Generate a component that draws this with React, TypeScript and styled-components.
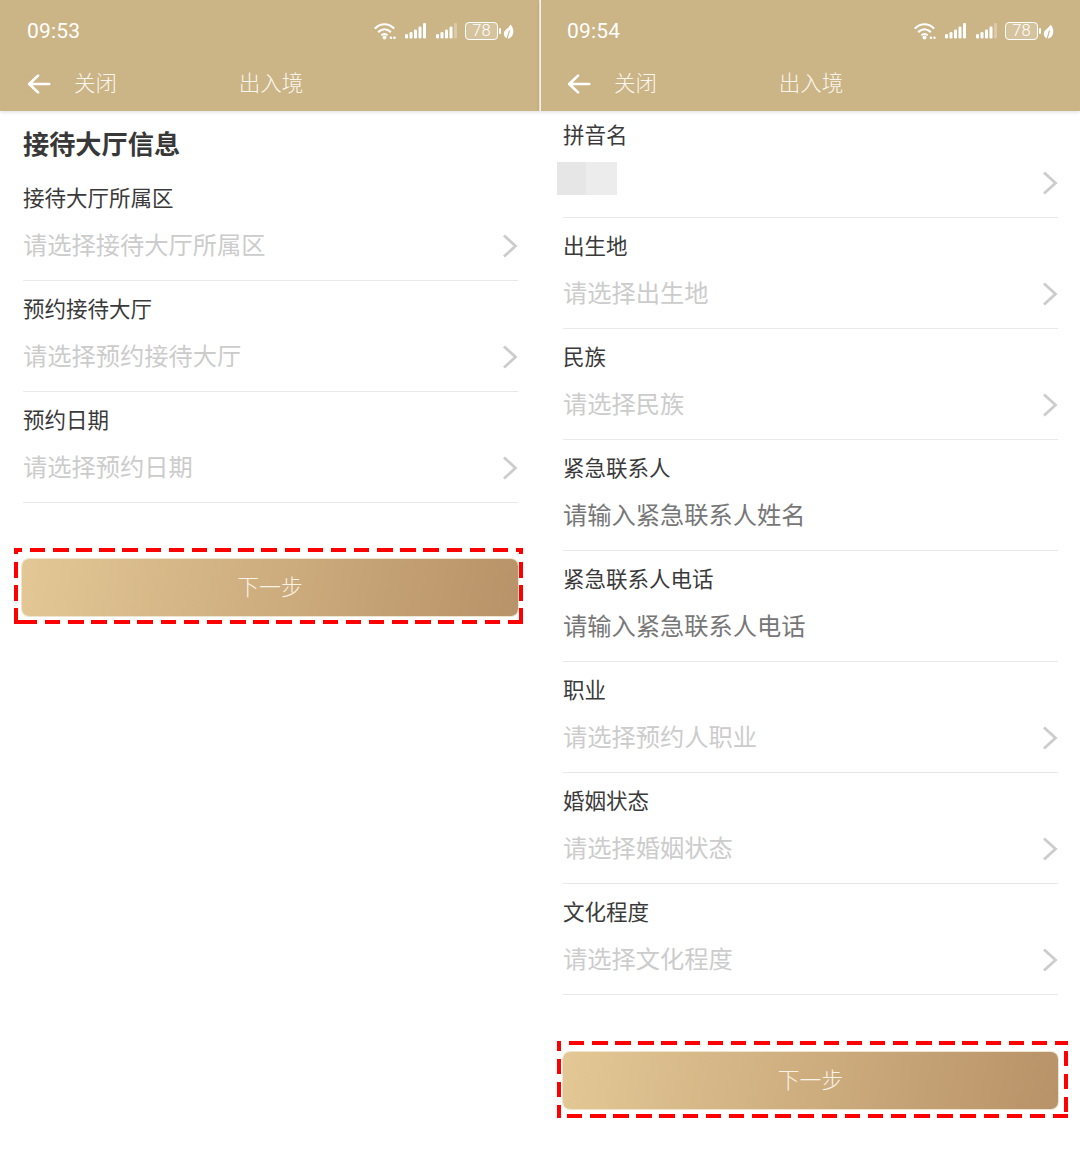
import { createGlobalStyle, styled } from "styled-components"

const GlobalStyle = createGlobalStyle`
  html, body {
    margin: 0;
    padding: 0;
    background: #fff;
  }
  body {
    font-family: "Liberation Sans", "Noto Sans CJK SC", sans-serif;
  }
  * {
    box-sizing: border-box;
  }
`

type FieldData = {
  label: string
  value?: string
  filled?: boolean
  arrow?: boolean
}

const leftFields: FieldData[] = [
  { label: "接待大厅所属区", value: "请选择接待大厅所属区", arrow: true },
  { label: "预约接待大厅", value: "请选择预约接待大厅", arrow: true },
  { label: "预约日期", value: "请选择预约日期", arrow: true },
]

const rightFields: FieldData[] = [
  { label: "出生地", value: "请选择出生地", arrow: true },
  { label: "民族", value: "请选择民族", arrow: true },
  { label: "紧急联系人", value: "请输入紧急联系人姓名", filled: true },
  { label: "紧急联系人电话", value: "请输入紧急联系人电话", filled: true },
  { label: "职业", value: "请选择预约人职业", arrow: true },
  { label: "婚姻状态", value: "请选择婚姻状态", arrow: true },
  { label: "文化程度", value: "请选择文化程度", arrow: true },
]

const Wifi = () => (
  <svg width="23" height="18" viewBox="0 0 23 18" fill="none" stroke="#fff" strokeLinecap="round">
    <path d="M1.5 6C6.8 1 14.2 1 19.5 6" strokeWidth="2.2" />
    <path d="M4.8 9.6C8.2 6.5 12.8 6.5 16.2 9.6" strokeWidth="2.2" />
    <path d="M8 12.8C9.5 11.8 11.5 11.8 13 12.8" strokeWidth="2" />
    <circle cx="10.5" cy="15.5" r="2" fill="#fff" stroke="none" />
    <circle cx="17" cy="15.8" r="1.3" fill="#fff" stroke="none" />
    <circle cx="20.5" cy="15.8" r="1.3" fill="#fff" stroke="none" />
  </svg>
)

const Signal = ({ dim }: { dim?: boolean }) => (
  <svg width="23" height="18" viewBox="0 0 23 18" fill="#fff">
    <rect x="1" y="12" width="3" height="4.5" rx="1.2" />
    <rect x="5.5" y="10" width="3" height="6.5" rx="1.2" />
    <rect x="10" y="7.5" width="3" height="9" rx="1.2" />
    <rect x="14.5" y="4.5" width="3" height="12" rx="1.2" />
    <rect x="19" y="1" width="3" height="15.5" rx="1.2" opacity={dim ? 0.3 : 1} />
  </svg>
)

const Leaf = () => (
  <svg width="11" height="15" viewBox="0 0 11 15">
    <path fill="#fff" d="M7.5 0.5C9.8 3 10.8 6 10.2 9.3C9.6 12.4 7.4 14.4 5 14.5C2.2 14.3 0.5 12 0.9 9C1.4 5.6 5.6 4.6 7.5 0.5Z" />
    <path fill="none" stroke="#cbb486" strokeWidth="1.1" d="M6.5 6.5L4.2 14.5" />
  </svg>
)

const BackArrow = () => (
  <svg width="24" height="20" viewBox="0 0 24 20" fill="none" stroke="#fff" strokeWidth="2.7" strokeLinecap="round" strokeLinejoin="round">
    <path d="M22.2 10H2.5" />
    <path d="M11 1.6L2.3 10L11 18.4" />
  </svg>
)

const Chevron = () => (
  <ChevronIcon width="16" height="24" viewBox="0 0 16 24" fill="none" stroke="#ccc" strokeWidth="2.8">
    <path d="M2 1.5L13.5 12L2 22.5" />
  </ChevronIcon>
)

const TopBar = ({ time, second }: { time: string; second?: boolean }) => (
  <Header $second={second}>
    <StatusBar>
      <Time>{time}</Time>
      <StatusIcons>
        <Wifi />
        <SignalGroup>
          <Signal />
          <Signal dim />
        </SignalGroup>
        <Battery>78</Battery>
        <BatteryTip />
        <Leaf />
      </StatusIcons>
    </StatusBar>
    <NavBar>
      <NavLeft>
        <BackArrow />
        <NavText>关闭</NavText>
      </NavLeft>
      <NavText>出入境</NavText>
    </NavBar>
  </Header>
)

const Field = ({ label, value, filled, arrow }: FieldData) => (
  <FieldRow>
    <Label>{label}</Label>
    <ValueRow>
      <Value $filled={filled}>{value}</Value>
      {arrow && <Chevron />}
    </ValueRow>
  </FieldRow>
)

const App = () => {
  return (
    <Page>
      <GlobalStyle />
      <Panel>
        <TopBar time="09:53" />
        <Content>
          <Title>接待大厅信息</Title>
          {leftFields.map((f) => (
            <Field key={f.label} {...f} />
          ))}
          <Frame
            $padLeft={8}
            $padRight={5}
            $padBottom={8}
            $width={509}
            $gap={45}
            $shift={-9}
            $dash={{ top: -7.3, bottom: 7.7, left: -9.15, right: -9.15, fill: 8 }}
          >
            <NextButton>下一步</NextButton>
          </Frame>
        </Content>
      </Panel>
      <Panel>
        <TopBar time="09:54" second />
        <Content>
          <FieldRow $first>
            <Label>拼音名</Label>
            <ValueRow>
              <Blurred>
                <BlurCell />
                <BlurCell $light />
              </Blurred>
              <Chevron />
            </ValueRow>
          </FieldRow>
          {rightFields.map((f) => (
            <Field key={f.label} {...f} />
          ))}
          <Frame
            $padLeft={6}
            $padRight={10}
            $padBottom={9}
            $width={511}
            $gap={46}
            $shift={-6}
            $dash={{ top: -11.3, bottom: -13.3, left: -5.3, right: 9.7, fill: 0 }}
          >
            <NextButton>下一步</NextButton>
          </Frame>
        </Content>
      </Panel>
    </Page>
  )
}
export default App

const Page = styled.div`
  width: 1080px;
  height: 1164px;
  display: grid;
  grid-template-columns: 540px 540px;
  background: #fff;
  overflow: hidden;
`

const Panel = styled.div`
  display: flex;
  flex-direction: column;
  min-width: 0;
`

const Header = styled.div<{ $second?: boolean }>`
  height: 111px;
  background: #cbb486;
  box-shadow:
    inset ${(p) => (p.$second ? "1px" : "-1px")} 0 0 #f4efe4,
    0 1px 4px rgba(0, 0, 0, 0.14);
  color: #fff;
  position: relative;
`

const StatusBar = styled.div`
  height: 62px;
  display: flex;
  align-items: center;
  justify-content: space-between;
  padding: 0 26px 0 27px;
`

const Time = styled.div`
  font-family: "Roboto", "Liberation Sans", sans-serif;
  font-size: 21px;
  font-weight: 400;
  letter-spacing: 0.2px;
`

const StatusIcons = styled.div`
  display: flex;
  align-items: center;
`

const SignalGroup = styled.div`
  display: flex;
  gap: 8px;
  margin: 0 7px 0 7px;
`

const Battery = styled.div`
  width: 33px;
  height: 18px;
  border: 1.5px solid #fff;
  border-radius: 4px;
  display: flex;
  align-items: center;
  justify-content: center;
  background: rgba(255, 255, 255, 0.2);
  font-family: "Roboto", "Liberation Sans", sans-serif;
  font-size: 16.5px;
  font-weight: 300;
  line-height: 1;
`

const BatteryTip = styled.div`
  width: 2px;
  height: 6px;
  margin: 0 2px 0 1px;
  background: #fff;
  border-radius: 1px;
`

const NavBar = styled.div`
  height: 44px;
  display: grid;
  grid-template-columns: 1fr auto 1fr;
  align-items: center;
  padding: 0 25px 0 27px;
`

const NavLeft = styled.div`
  display: flex;
  align-items: center;
  gap: 23px;
`

const NavText = styled.div`
  padding-bottom: 4px;
  font-family: "Noto Sans CJK SC", sans-serif;
  font-size: 21.5px;
  font-weight: 300;
  line-height: 30px;
  color: #faf6ee;
`

const Content = styled.div`
  padding: 0 22px 0 23px;
  display: flex;
  flex-direction: column;
`

const Title = styled.div`
  height: 59px;
  display: flex;
  align-items: center;
  padding-top: 5px;
  font-family: "Noto Sans CJK SC", sans-serif;
  font-size: 26.2px;
  font-weight: 700;
  color: #383838;
`

const FieldRow = styled.div<{ $first?: boolean }>`
  padding-top: ${(p) => (p.$first ? "9px" : "13px")};
  padding-bottom: 18px;
  border-bottom: 1px solid #e8e8e8;
`

const Label = styled.div`
  height: 30px;
  font-family: "Noto Sans CJK SC", sans-serif;
  font-size: 21.5px;
  line-height: 28px;
  color: #3a3a3a;
`

const ValueRow = styled.div`
  height: 34px;
  margin-top: 15px;
  display: flex;
  align-items: center;
  justify-content: space-between;
`

const Value = styled.div<{ $filled?: boolean }>`
  padding-bottom: 2px;
  font-family: "Noto Sans CJK SC", sans-serif;
  font-size: 24.25px;
  line-height: 32px;
  color: ${(p) => (p.$filled ? "#777" : "#ccc")};
`

const ChevronIcon = styled.svg`
  display: block;
  margin-top: 1px;
  flex: none;
`

const Blurred = styled.div`
  display: flex;
  align-self: flex-start;
  height: 33px;
  margin: -3px 0 0 -6px;
`

const BlurCell = styled.div<{ $light?: boolean }>`
  width: ${(p) => (p.$light ? "31px" : "29px")};
  background: ${(p) => (p.$light ? "#ececec" : "#e6e6e6")};
`

type DashPhase = { top: number; bottom: number; left: number; right: number; fill: number }

const DASH = 15.5
const PERIOD = 23.15

const dashLine = (deg: number, start: number, length = DASH) =>
  `repeating-linear-gradient(${deg}deg, #f00 ${start}px ${start + length}px, transparent ${start + length}px ${start + PERIOD}px)`

/* red dashed marker drawn round the button, the phases differ per edge */
const Frame = styled.div<{
  $padLeft: number
  $padRight: number
  $padBottom: number
  $width: number
  $gap: number
  $shift: number
  $dash: DashPhase
}>`
  width: ${(p) => p.$width}px;
  margin: ${(p) => p.$gap}px 0 0 ${(p) => p.$shift}px;
  padding: 11px ${(p) => p.$padRight}px ${(p) => p.$padBottom}px ${(p) => p.$padLeft}px;
  background-image:
    linear-gradient(#f00, #f00),
    ${(p) => dashLine(90, p.$dash.top)},
    ${(p) => dashLine(90, p.$dash.bottom)},
    ${(p) => dashLine(180, p.$dash.left)},
    ${(p) => dashLine(180, p.$dash.right)};
  background-size: ${(p) => p.$dash.fill}px 4px, 100% 4px, 100% 4px, 4px 100%, 4px 100%;
  background-position: 0 100%, 0 0, 0 100%, 0 0, 100% 0;
  background-repeat: no-repeat;
`

const NextButton = styled.button`
  display: flex;
  align-items: center;
  justify-content: center;
  width: 100%;
  height: 57px;
  padding: 0 0 4px;
  border: none;
  border-radius: 7px;
  background: linear-gradient(100deg, #e3c895 0%, #b89268 100%);
  box-shadow: 0 0 0 1px rgba(226, 205, 165, 0.55);
  color: #f8f3e8;
  font-family: "Noto Sans CJK SC", sans-serif;
  font-size: 21.8px;
  font-weight: 300;
`
